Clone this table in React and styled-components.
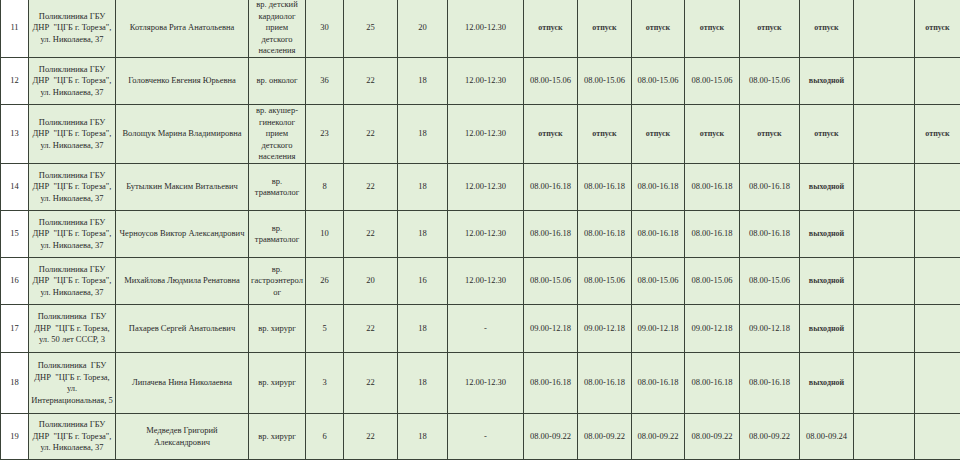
import styled, { createGlobalStyle } from 'styled-components'

const GlobalStyle = createGlobalStyle`
  html, body {
    margin: 0;
    padding: 0;
    background: #e3efda;
    overflow: hidden;
  }
`

const Page = styled.div`
  width: 960px;
  height: 460px;
  overflow: hidden;
  background: #e3efda;
`

const Table = styled.table`
  width: 960px;
  margin-top: -2px;
  border-collapse: collapse;
  table-layout: fixed;
  font-family: 'Liberation Serif', 'Times New Roman', serif;
  font-size: 8.5px;
  line-height: 11.5px;
  color: #2a2a2a;
`

const Row = styled.tr`
  height: ${(p) => p.$h}px;
`

const Cell = styled.td`
  border: 1px solid #3a4338;
  background: ${(p) => (p.$white ? '#ffffff' : '#e3efda')};
  text-align: center;
  vertical-align: middle;
  padding: 0 2px;
  overflow: hidden;
  white-space: pre-wrap;
  font-weight: ${(p) => (p.$strong ? 700 : 400)};
  font-size: ${(p) => (p.$strong ? '8px' : 'inherit')};
  color: ${(p) => (p.$strong ? '#3a3a3a' : 'inherit')};
`

const widths = [28, 87, 133, 57, 38, 54, 50, 76, 54, 54, 53, 55, 60, 54, 61, 46]

const clinic = ['Поликлиника ГБУ', 'ДНР  "ЦГБ г. Тореза",', 'ул. Николаева, 37']

const rows = [
  {
    n: 11, h: 59, clinic, name: ['Котлярова Рита Анатольевна'],
    spec: ['вр. детский', 'кардиолог', 'прием', 'детского', 'населения'],
    a: '30', b: '25', c: '20', lunch: '12.00-12.30',
    days: ['отпуск', 'отпуск', 'отпуск', 'отпуск', 'отпуск', 'отпуск', '', 'отпуск'],
  },
  {
    n: 12, h: 47, clinic, name: ['Головченко Евгения Юрьевна'], spec: ['вр. онколог'],
    a: '36', b: '22', c: '18', lunch: '12.00-12.30',
    days: ['08.00-15.06', '08.00-15.06', '08.00-15.06', '08.00-15.06', '08.00-15.06', 'выходной', '', ''],
  },
  {
    n: 13, h: 59, clinic, name: ['Волощук Марина Владимировна'],
    spec: ['вр. акушер-', 'гинеколог', 'прием', 'детского', 'населения'],
    a: '23', b: '22', c: '18', lunch: '12.00-12.30',
    days: ['отпуск', 'отпуск', 'отпуск', 'отпуск', 'отпуск', 'отпуск', '', 'отпуск'],
  },
  {
    n: 14, h: 47, clinic, name: ['Бутылкин Максим Витальевич'], spec: ['вр.', 'травматолог'],
    a: '8', b: '22', c: '18', lunch: '12.00-12.30',
    days: ['08.00-16.18', '08.00-16.18', '08.00-16.18', '08.00-16.18', '08.00-16.18', 'выходной', '', ''],
  },
  {
    n: 15, h: 47, clinic, name: ['Черноусов Виктор Александрович'], spec: ['вр.', 'травматолог'],
    a: '10', b: '22', c: '18', lunch: '12.00-12.30',
    days: ['08.00-16.18', '08.00-16.18', '08.00-16.18', '08.00-16.18', '08.00-16.18', 'выходной', '', ''],
  },
  {
    n: 16, h: 47, clinic, name: ['Михайлова Людмила Ренатовна'], spec: ['вр.', 'гастроэнтерол', 'ог'],
    a: '26', b: '20', c: '16', lunch: '12.00-12.30',
    days: ['08.00-15.06', '08.00-15.06', '08.00-15.06', '08.00-15.06', '08.00-15.06', 'выходной', '', ''],
  },
  {
    n: 17, h: 48, clinic: ['Поликлиника  ГБУ', 'ДНР  "ЦГБ г. Тореза,', 'ул. 50 лет СССР, 3'],
    name: ['Пахарев Сергей Анатольевич'], spec: ['вр. хирург'],
    a: '5', b: '22', c: '18', lunch: '-',
    days: ['09.00-12.18', '09.00-12.18', '09.00-12.18', '09.00-12.18', '09.00-12.18', 'выходной', '', ''],
  },
  {
    n: 18, h: 61, clinic: ['Поликлиника  ГБУ', 'ДНР  "ЦГБ г. Тореза,', 'ул.', 'Интернациональная, 5'],
    name: ['Липачева Нина Николаевна'], spec: ['вр. хирург'],
    a: '3', b: '22', c: '18', lunch: '12.00-12.30',
    days: ['08.00-16.18', '08.00-16.18', '08.00-16.18', '08.00-16.18', '08.00-16.18', 'выходной', '', ''],
  },
  {
    n: 19, h: 46, clinic, name: ['Медведев Григорий', 'Александрович'], spec: ['вр. хирург'],
    a: '6', b: '22', c: '18', lunch: '-',
    days: ['08.00-09.22', '08.00-09.22', '08.00-09.22', '08.00-09.22', '08.00-09.22', '08.00-09.24', '', ''],
  },
]

const Lines = ({ lines }) =>
  lines.map((l, i) => (
    <span key={i}>
      {i > 0 && <br />}
      {l}
    </span>
  ))

const isWord = (v) => v === 'отпуск' || v === 'выходной'

export default function App() {
  return (
    <Page>
      <GlobalStyle />
      <Table>
        <colgroup>
          {widths.map((w, i) => (
            <col key={i} style={{ width: w }} />
          ))}
        </colgroup>
        <tbody>
          {rows.map((r) => (
            <Row key={r.n} $h={r.h}>
              <Cell $white>{r.n}</Cell>
              <Cell><Lines lines={r.clinic} /></Cell>
              <Cell><Lines lines={r.name} /></Cell>
              <Cell><Lines lines={r.spec} /></Cell>
              <Cell>{r.a}</Cell>
              <Cell>{r.b}</Cell>
              <Cell>{r.c}</Cell>
              <Cell>{r.lunch}</Cell>
              {r.days.map((d, i) => (
                <Cell key={i} $strong={isWord(d)}>{d}</Cell>
              ))}
            </Row>
          ))}
        </tbody>
      </Table>
    </Page>
  )
}
